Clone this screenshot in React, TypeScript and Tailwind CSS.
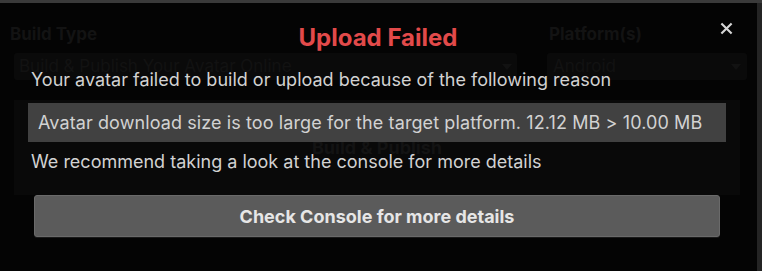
import React from "react";

const Caret = () => (
  <svg width="10" height="6" viewBox="0 0 10 6" className="fill-[#121212]">
    <path d="M0 0h10L5 6z" />
  </svg>
);

const App = () => {
  return (
    <div
      className="w-[762px] h-[271px] bg-[#040404] flex flex-col overflow-hidden relative"
      style={{ fontFamily: "Inter, 'Noto Sans', sans-serif" }}
    >
      <div className="h-[3px] bg-[#3a3a3a]" />
      <div className="flex flex-1">
        {/* faded editor behind the popup */}
        <div className="flex-1 flex flex-col pl-[10px] pr-[10px]">
          <div className="flex gap-[30px] pt-[19px]">
            <div className="w-[507px] flex flex-col">
              <div className="font-bold text-[17px] text-[#131313] h-[22px]">Build Type</div>
              <div className="mt-[9px] ml-[4px] h-[27px] bg-[#0a0a0a] rounded-[3px] flex items-center justify-between px-[5px]">
                <span className="text-[17px] text-[#121212]">Build &amp; Publish Your Avatar Online</span>
                <Caret />
              </div>
            </div>
            <div className="w-[200px] flex flex-col">
              <div className="font-bold text-[17px] text-[#131313] h-[22px] pl-[2px]">Platform(s)</div>
              <div className="mt-[9px] h-[27px] bg-[#0a0a0a] rounded-[3px] flex items-center justify-between px-[6px]">
                <span className="text-[17px] text-[#121212]">Android</span>
                <Caret />
              </div>
            </div>
          </div>
          <div className="mt-[20px] ml-[4px] w-[726px] h-[95px] bg-[#090909] flex justify-center pt-[34px]">
            <span className="font-bold text-[18px] text-[#131313]">Build &amp; Publish</span>
          </div>
        </div>
        <div className="w-[6px] bg-[#242424]" />
      </div>

      {/* popup */}
      <div className="absolute left-0 top-[4px] right-[6px] bottom-0 flex flex-col">
        <div className="relative flex justify-center pt-[20px] h-[58px]">
          <span className="font-bold text-[24px] text-[#e24a4a] leading-[28px]">Upload Failed</span>
          <button className="absolute right-[23px] top-[18px] text-[#d6d6d6]">
            <svg width="13" height="13" viewBox="0 0 14 14" stroke="currentColor" strokeWidth="2.3">
              <path d="M1.5 1.5l11 11M12.5 1.5l-11 11" />
            </svg>
          </button>
        </div>
        <div className="px-[28px] flex flex-col">
          <div className="pl-[3px] text-[18px] text-[#d2d2d2] leading-[22px] h-[41px] pt-[7px] whitespace-nowrap">
            Your avatar failed to build or upload because of the following reason
          </div>
          <div className="h-[39px] w-[698px] bg-[#414141] flex items-center pl-[10px] text-[18px] tracking-[0.1px] text-[#d2d2d2] whitespace-nowrap">
            Avatar download size is too large for the target platform. 12.12 MB &gt; 10.00 MB
          </div>
          <div className="pl-[3px] pt-[9px] text-[18px] text-[#d2d2d2] leading-[22px] whitespace-nowrap">
            We recommend taking a look at the console for more details
          </div>
          <button className="mt-[22px] ml-[6px] w-[686px] h-[42px] bg-[#5b5b5b] rounded-[3px] border border-[#6a6a6a] shadow-[0_1px_0_#1a1a1a] font-bold text-[18px] text-[#e6e6e6]">
            Check Console for more details
          </button>
        </div>
      </div>
    </div>
  );
};

export default App;
